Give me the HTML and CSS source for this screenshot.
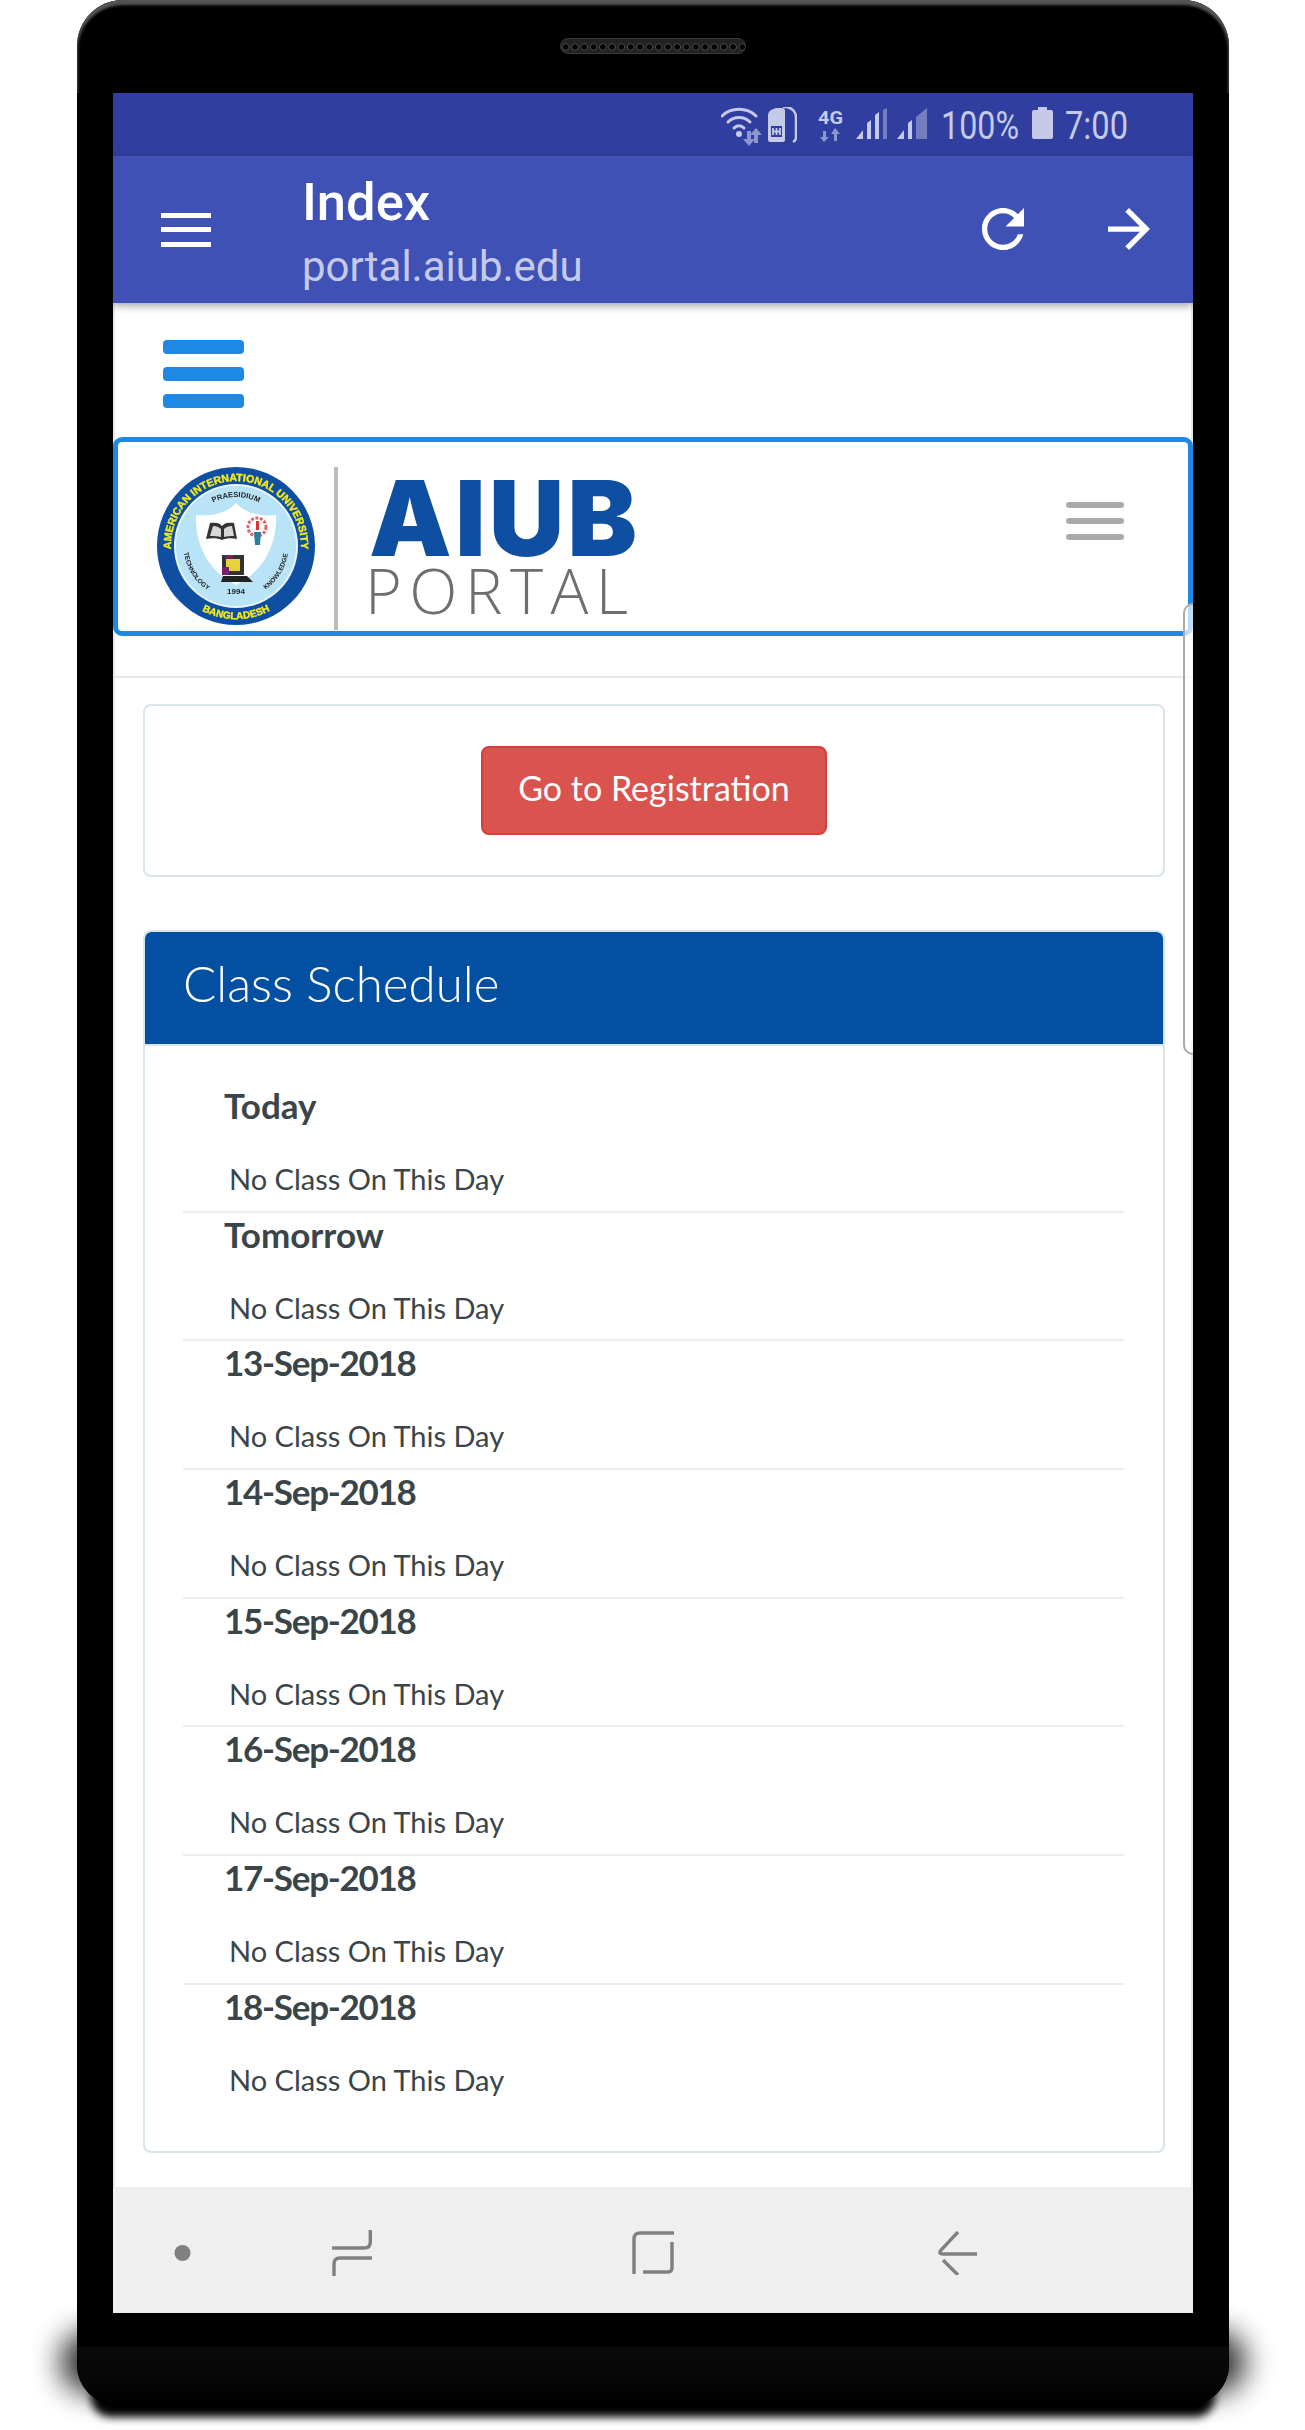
FILE: index.html
```html
<!DOCTYPE html>
<html lang="en">
<head>
<meta charset="utf-8">
<title>AIUB Portal</title>
<link rel="stylesheet" href="styles.css">
</head>
<body>
<div class="stage">
  <div class="phone">
    <div class="bezel-top"><div class="speaker"></div></div>
    <div class="screen">
      <div class="status">
        <svg class="st-wifi" width="76" height="40" viewBox="0 0 76 40">
          <g fill="none" stroke="#c5cae9" stroke-width="3" stroke-linecap="round">
            <path d="M1 9C10 0 26 0 35 9"/><path d="M7 15C13 9 23 9 29 15"/><path d="M13 21C16 18 20 18 23 21"/>
          </g>
          <circle cx="18" cy="27" r="3" fill="#c5cae9"/>
          <path d="M25 24h4v8h4l-6 7-6-7h4zM34 21l6 7h-4v8h-4v-8h-4z" fill="#8c97cf" transform="translate(1 0)"/>
          <path d="M47 8a6 6 0 0 1 3-5l5-2h6a4 4 0 0 1 3 2v30a2 2 0 0 1-2 2H49a2 2 0 0 1-2-2z" fill="#c5cae9"/>
          <path d="M62 0h4c5 1 9 5 9 10v21c0 2-1 3-3 4" fill="none" stroke="#c5cae9" stroke-width="2.5"/>
          <path d="M50 19h11v11H50z" fill="#303f9f"/>
          <path d="M52 21v7M55.500 21v7M59 21v7M52 24.500h7" stroke="#c5cae9" stroke-width="1.8" fill="none"/>
        </svg>
        <svg class="st-net" width="25" height="32" viewBox="0 0 25 32">
          <text class="st-4g" x="0" y="14" textLength="25" lengthAdjust="spacingAndGlyphs">4G</text>
          <path d="M5 21h3v6h3l-5 5-4-5h3zM17 18l5 6h-3v7h-3v-7h-3z" fill="#8c97cf"/>
        </svg>
        <svg class="st-signal" width="71" height="31" viewBox="0 0 71 31">
          <g fill="#c5cae9">
            <path d="M0 31l7-9v9zM11 15l4-3v19h-4zM19 7l4-3v27h-4z"/>
            <path d="M27 2l4-2v31h-4z" opacity=".45"/>
            <path d="M41 31l7-9v9zM52 15l4-3v19h-4z"/>
            <path d="M60 9l11-9v31H60z" opacity=".45"/>
          </g>
        </svg>
        <svg class="st-text st-pct" width="78" height="37" viewBox="0 0 78 37">
          <text x="0" y="32" textLength="78" lengthAdjust="spacingAndGlyphs">100%</text>
        </svg>
        <svg class="st-batt" width="21" height="32" viewBox="0 0 21 32">
          <path d="M6 0h9v3h4a2 2 0 0 1 2 2v25a2 2 0 0 1-2 2H2a2 2 0 0 1-2-2V5a2 2 0 0 1 2-2h4z" fill="#c5cae9"/>
        </svg>
        <svg class="st-text st-time" width="63" height="37" viewBox="0 0 63 37">
          <text x="0" y="32" textLength="63" lengthAdjust="spacingAndGlyphs">7:00</text>
        </svg>
      </div>

      <header class="appbar">
        <svg class="ab-menu" width="50" height="34" viewBox="0 0 50 34"><path d="M0 0h50v5H0zM0 14h50v5H0zM0 29h50v5H0z" fill="#fff"/></svg>
        <div class="ab-titles">
          <div class="ab-title">Index</div>
          <div class="ab-url">portal.aiub.edu</div>
        </div>
        <svg class="ab-refresh" width="42" height="42" viewBox="4 4 16 16"><path fill="#fff" d="M17.65 6.35C16.2 4.9 14.21 4 12 4c-4.42 0-7.99 3.58-7.99 8s3.57 8 7.99 8c3.73 0 6.84-2.55 7.73-6h-2.08c-.82 2.33-3.04 4-5.65 4-3.31 0-6-2.69-6-6s2.69-6 6-6c1.66 0 3.14.69 4.22 1.78L13 11h7V4l-2.35 2.35z"/></svg>
        <svg class="ab-forward" width="42" height="42" viewBox="4 4 16 16"><path fill="#fff" d="M12 4l-1.41 1.41L16.17 11H4v2h12.17l-5.58 5.59L12 20l8-8z"/></svg>
      </header>

      <div class="content">
        <div class="side-toggle"><span></span><span></span><span></span></div>

        <nav class="brandbar">
          <div class="logo">
            <svg class="seal" width="158" height="158" viewBox="0 0 158 158">
              <defs>
                <path id="arcTop" d="M22.700 111.500A65 65 0 1 1 135.300 111.500"/>
                <path id="arcBottom" d="M16 116A73 73 0 0 0 142 116"/>
                <path id="arcMotto" d="M52 38A50 50 0 0 1 106 38"/>
                <path id="arcLeft" d="M27 84A52 52 0 0 0 52 124"/>
                <path id="arcRight" d="M106 124A52 52 0 0 0 131 84"/>
              </defs>
              <circle cx="79" cy="79" r="79" fill="#0f4fa2"/>
              <circle cx="79" cy="79" r="62" fill="#eaf6fc"/>
              <circle cx="79" cy="79" r="60" fill="#b9e3f7"/>
              <path d="M39 48C55 50 70 46 79 36 88 46 103 50 119 48 120 80 105 105 79 118 53 105 38 80 39 48z" fill="#fff"/>
              <text class="seal-gold" font-size="10.500"><textPath href="#arcTop" startOffset="50%" text-anchor="middle">AMERICAN INTERNATIONAL UNIVERSITY</textPath></text>
              <text class="seal-gold" font-size="10"><textPath href="#arcBottom" startOffset="50%" text-anchor="middle">BANGLADESH</textPath></text>
              <text class="seal-ink" font-size="7.500"><textPath href="#arcMotto" startOffset="50%" text-anchor="middle">PRAESIDIUM</textPath></text>
              <text class="seal-ink" font-size="6.500"><textPath href="#arcLeft" startOffset="50%" text-anchor="middle">TECHNOLOGY</textPath></text>
              <text class="seal-ink" font-size="6.500"><textPath href="#arcRight" startOffset="50%" text-anchor="middle">KNOWLEDGE</textPath></text>
              <text class="seal-ink" x="79" y="127" font-size="8" text-anchor="middle">1994</text>
              <path d="M49 72l4-16c6-1 10 0 12 3 2-3 6-4 12-3l3 16c-5-1-11-1-15 1-4-2-11-2-16-1z" fill="#333"/>
              <path d="M53 69l3-10c3 0 6 1 8 3v8c-3-1-7-1-11-1zM67 70v-8c2-2 5-3 8-3l2 10c-4 0-7 0-10 1z" fill="#d8d8d8"/>
              <circle cx="100" cy="60" r="9" fill="none" stroke="#e5626c" stroke-width="3" stroke-dasharray="3 1.500"/>
              <path d="M99 54h3v9h-3z" fill="#d33"/>
              <path d="M97 65h7l-1 13h-5z" fill="#2b7f9c"/>
              <path d="M65 88h22v20H65z" fill="#333"/>
              <path d="M69 92h14v12H69z" fill="#e8d23c"/>
              <path d="M65 100h7v8h-7zM68 88h8v3h-8z" fill="#7a1f6b"/>
              <path d="M66 109h24l6 6H64z" fill="#222"/>
            </svg>
            <span class="logo-rule"></span>
            <div class="logo-words">
              <span class="logo-aiub">AIUB</span>
              <span class="logo-portal">PORTAL</span>
            </div>
          </div>
          <div class="nav-toggle"><span></span><span></span><span></span></div>
        </nav>

        <div class="nav-rule"></div>

        <main class="wrap">
          <section class="panel panel-action">
            <a class="btn-danger" href="#">Go to Registration</a>
          </section>

          <section class="panel panel-schedule">
            <h2 class="panel-head">Class Schedule</h2>
            <div class="panel-body">
              <div class="day"><div class="day-name">Today</div><p class="day-note">No Class On This Day</p></div>
              <div class="day"><div class="day-name">Tomorrow</div><p class="day-note">No Class On This Day</p></div>
              <div class="day"><div class="day-name day-date">13-Sep-2018</div><p class="day-note">No Class On This Day</p></div>
              <div class="day"><div class="day-name day-date">14-Sep-2018</div><p class="day-note">No Class On This Day</p></div>
              <div class="day"><div class="day-name day-date">15-Sep-2018</div><p class="day-note">No Class On This Day</p></div>
              <div class="day"><div class="day-name day-date">16-Sep-2018</div><p class="day-note">No Class On This Day</p></div>
              <div class="day"><div class="day-name day-date">17-Sep-2018</div><p class="day-note">No Class On This Day</p></div>
              <div class="day day-last"><div class="day-name day-date">18-Sep-2018</div><p class="day-note">No Class On This Day</p></div>
            </div>
          </section>
        </main>

        <div class="scroll-tab"></div>
      </div>

      <div class="navbar">
        <svg class="nv-dot" width="17" height="16" viewBox="0 0 17 16"><ellipse cx="8.500" cy="8" rx="8" ry="8" fill="#808080"/></svg>
        <svg class="nv-recent" width="40" height="46" viewBox="0 0 40 46" fill="none" stroke="#808080" stroke-width="3.400"><path d="M38.300 0v12q0 6-6 6H0"/><path d="M40 28H8q-6 0-6 6v12"/></svg>
        <svg class="nv-home" width="42" height="43" viewBox="0 0 42 43" fill="none" stroke="#808080" stroke-width="3.400"><path d="M42 2H8Q2 2 2 8v35"/><path d="M40 11v26q0 4-4 4H11"/></svg>
        <svg class="nv-back" width="40" height="44" viewBox="0 0 40 44" fill="none" stroke="#808080" stroke-width="3.400"><path d="M21 1L4 19q-3 4 2 4h34"/><path d="M6 29l15 15"/></svg>
      </div>
    </div>
    <div class="chin"></div>
  </div>
</div>
</body>
</html>
```
FILE: styles.css
```css
* { box-sizing: border-box; }

html {
  background: #fff;
}

body {
  margin: 0;
}

.stage {
  position: relative;
  z-index: 0;
  width: 1305px;
  height: 2430px;
  padding-left: 77px;
  overflow: hidden;
}

.phone {
  position: relative;
  width: 1152px;
  height: 2405px;
  background: #000;
  border-radius: 46px 46px 40px 40px;
}

.phone::before {
  content: "";
  position: absolute;
  z-index: -1;
  left: -16px;
  right: -16px;
  bottom: 12px;
  height: 62px;
  background: #000;
  border-radius: 30px;
  opacity: .85;
  filter: blur(15px);
}

.phone::after {
  content: "";
  position: absolute;
  z-index: -1;
  left: 14px;
  right: 14px;
  bottom: -12px;
  height: 40px;
  background: #000;
  border-radius: 20px;
  filter: blur(4px);
}

.bezel-top {
  height: 93px;
  padding-top: 38px;
  display: flex;
  justify-content: center;
  border-radius: 46px 46px 0 0;
  box-shadow: inset 0 7px 3px -2px #555, inset 3px 4px 3px -2px #444, inset -3px 4px 3px -2px #444;
}

.speaker {
  width: 186px;
  height: 16px;
  border-radius: 8px;
  background-color: #1c1c1c;
  background-image: radial-gradient(circle at center, #000 0, #000 2.400px, #555 3.200px, #222 4px);
  background-size: 9.300px 16px;
  border: 1px solid #3a3a3a;
}

.screen {
  width: 1080px;
  height: 2220px;
  margin-left: 36px;
  background: #fff;
  display: flex;
  flex-direction: column;
  overflow: hidden;
}

.chin {
  height: 58px;
  margin-top: 34px;
  border-radius: 0 0 40px 40px;
  background: linear-gradient(#0a0a0a, #060606 60%, #000);
}

/* status bar */
.status {
  flex: none;
  height: 63px;
  background: #303f9f;
  display: flex;
  justify-content: flex-end;
  align-items: flex-start;
  padding: 14px 65px 0 0;
}

.st-wifi { margin-right: 21px; }
.st-net { margin: 3px 13px 0 0; }
.st-signal { margin: 1px 14px 0 0; }
.st-pct { margin: 0 13px 0 0; }
.st-batt { margin-right: 12px; }

.st-text text {
  font-family: Roboto, "Liberation Sans", sans-serif;
  font-weight: 400;
  font-size: 38px;
  fill: #c5cae9;
}

.st-4g {
  font-family: Roboto, "Liberation Sans", sans-serif;
  font-weight: 700;
  font-size: 18px;
  fill: #c5cae9;
}

/* app bar */
.appbar {
  flex: none;
  position: relative;
  z-index: 2;
  height: 147px;
  background: #3f51b5;
  box-shadow: 0 3px 8px rgba(0, 0, 0, .35);
  display: flex;
  align-items: center;
  padding-left: 48px;
  font-family: Roboto, sans-serif;
}

.ab-titles {
  width: 680px;
  margin-left: 91px;
  padding-top: 6px;
}

.ab-title {
  color: #fff;
  font-weight: 500;
  font-size: 52.500px;
  line-height: 62px;
}

.ab-url {
  color: #c5cae9;
  font-size: 42px;
  line-height: 54px;
  margin-top: 7px;
}

.ab-refresh { margin-top: -2px; }
.ab-forward { margin: -2px 0 0 84px; }

/* page content */
.content {
  position: relative;
  flex: 1;
  min-height: 0;
  font-family: Lato, "Noto Sans", sans-serif;
  color: #3a4549;
  border-left: 2px solid #e7e7e7;
  border-right: 2px solid #e7e7e7;
  background: #fff;
}

.side-toggle {
  display: flex;
  flex-direction: column;
  gap: 13px;
  width: 81px;
  margin: 37px 0 29px 48px;
}

.side-toggle span {
  height: 14px;
  border-radius: 4px;
  background: #1e88e5;
}

.brandbar {
  height: 199px;
  margin: 0 -2px;
  border: 5px solid #1e88e5;
  border-radius: 9px;
  display: flex;
  justify-content: space-between;
  background: #fff;
}

.logo {
  display: flex;
  align-items: flex-start;
  padding: 25px 0 0 39px;
  filter: blur(.7px);
}

.seal-gold {
  font-family: "Liberation Sans", sans-serif;
  font-weight: 700;
  fill: #f4ea1c;
  stroke: #f4ea1c;
  stroke-width: .4px;
}

.seal-ink {
  font-family: "Liberation Sans", sans-serif;
  font-weight: 700;
  fill: #222;
}

.logo-rule {
  width: 4px;
  height: 163px;
  margin: 0 31px 0 19px;
  background: #bcbcbc;
}

.logo-words {
  display: flex;
  flex-direction: column;
  padding-top: 5px;
}

.logo-aiub {
  font-family: Inter, "Liberation Sans", sans-serif;
  font-weight: 900;
  font-size: 104px;
  line-height: 92px;
  letter-spacing: 3.500px;
  color: #0f4fa2;
}

.logo-portal {
  font-family: "Open Sans", "Liberation Sans", sans-serif;
  font-weight: 300;
  font-size: 63px;
  line-height: 52px;
  letter-spacing: 7.500px;
  margin-left: -4px;
  color: #6e6e6e;
}

.nav-toggle {
  display: flex;
  flex-direction: column;
  gap: 10.500px;
  width: 58px;
  margin: 60px 64px 0 0;
}

.nav-toggle span {
  height: 5.500px;
  border-radius: 3px;
  background: #aaa;
}

.nav-rule {
  height: 2px;
  margin: 40px -2px 0;
  background: #e7e7e7;
}

.wrap {
  padding: 26px 26px 0 28px;
}

.panel {
  border: 2px solid #d9e5ea;
  border-radius: 8px;
  background: #fff;
}

.panel-action {
  height: 173px;
  display: flex;
  justify-content: center;
  padding-top: 40px;
}

.btn-danger {
  width: 346px;
  height: 89px;
  border: 2px solid #d43f3a;
  border-radius: 8px;
  background: #d9534f;
  color: #fff;
  font-size: 34px;
  line-height: 79px;
  text-align: center;
  text-decoration: none;
}

.panel-schedule {
  margin-top: 53px;
  height: 1223px;
  overflow: hidden;
}

.panel-head {
  height: 114px;
  margin: 0;
  padding-left: 38px;
  background: #0350a2;
  border-bottom: 2px solid #d9e5ea;
  border-radius: 6px 6px 0 0;
  color: #fff;
  font-weight: 300;
  font-size: 49.300px;
  line-height: 102px;
}

.panel-body {
  padding: 38px 39px 0 38px;
}

.day {
  height: 128.670px;
  border-bottom: 2px solid #eee;
  padding-left: 41px;
}

.day-last { border-bottom: 0; }

.day-name {
  font-weight: 700;
  font-size: 35px;
  line-height: 42px;
  height: 42px;
}

.day-date { letter-spacing: -1.270px; }

.day-note {
  margin: 31px 0 0 5px;
  font-size: 29px;
  line-height: 44px;
}

.scroll-tab {
  position: absolute;
  top: 300px;
  right: -2px;
  width: 10px;
  height: 452px;
  border: 2px solid #aaa;
  border-right: 0;
  border-radius: 10px 0 0 10px;
  background: rgba(255, 255, 255, .7);
}

/* bottom nav */
.navbar {
  flex: none;
  height: 126px;
  background: #efefef;
  display: flex;
  align-items: flex-start;
  padding-left: 61px;
}

.nv-dot { margin: 58px 0 0 0; }
.nv-recent { margin: 43px 0 0 141px; }
.nv-home { margin: 44px 0 0 260px; }
.nv-back { margin: 44px 0 0 263px; }
```
